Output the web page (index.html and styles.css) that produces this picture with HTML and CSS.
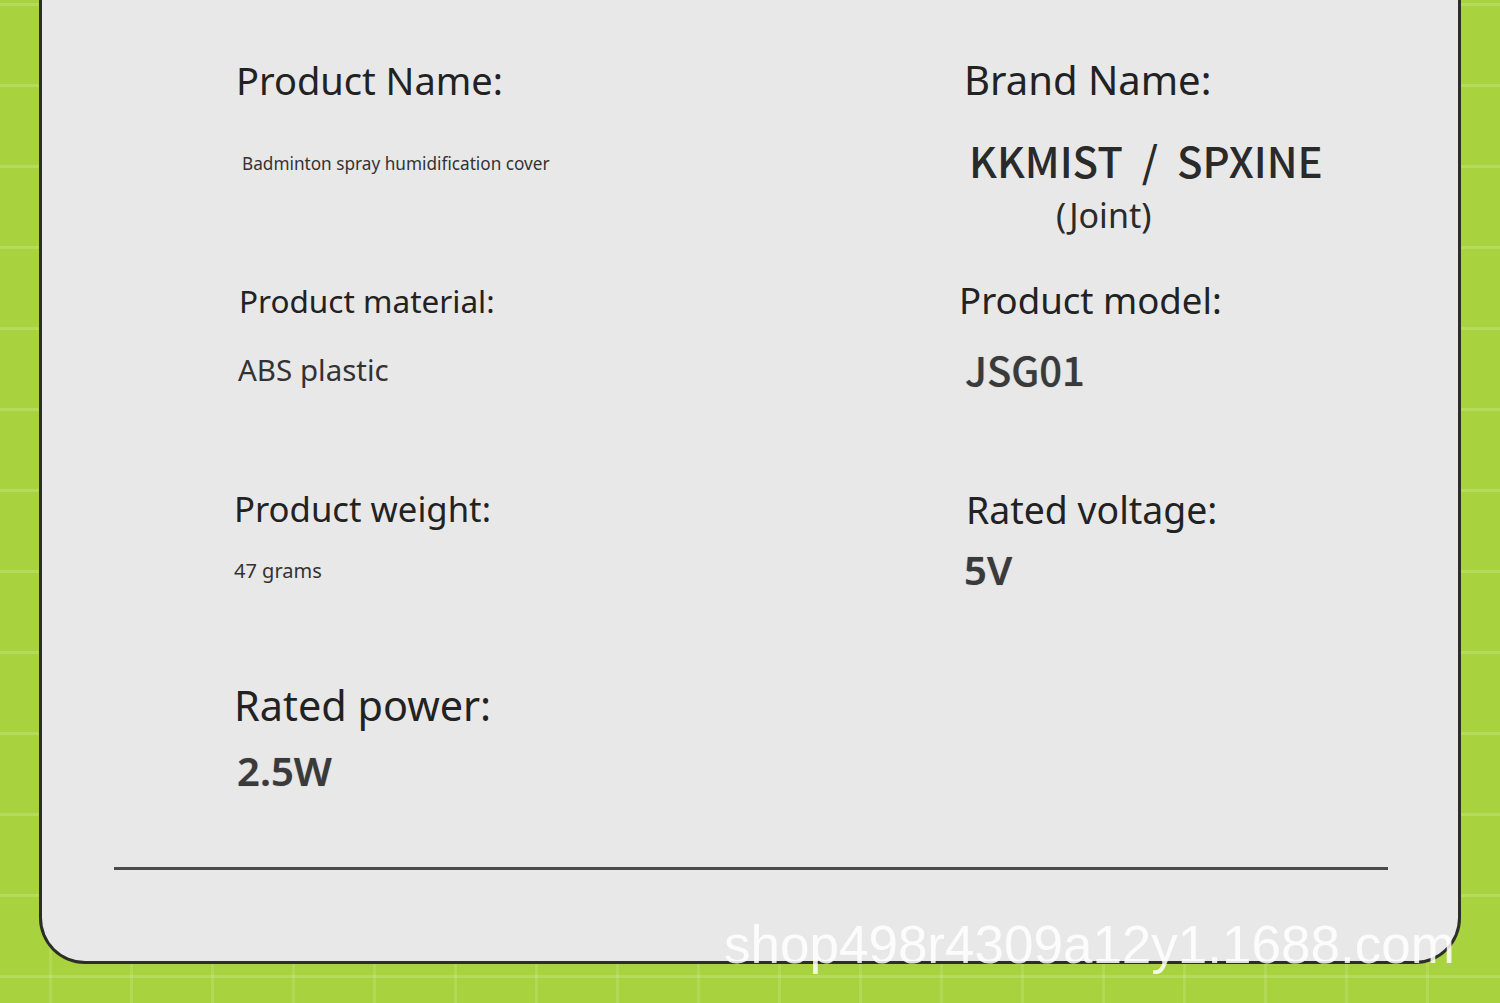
FILE: index.html
```html
<!DOCTYPE html>
<html>
<head>
<meta name="viewport" content="width=device-width, initial-scale=1.0">
<link rel="stylesheet" href="styles.css">
</head>
<body>
<div class="card">
	<div class="specs">
		<div class="cell">
			<div class="label lg">Product Name:</div>
			<div class="val-name">Badminton spray humidification cover</div>
		</div>
		<div class="cell">
			<div class="label brand-label">Brand Name:</div>
			<div class="brand">KKMIST&nbsp; /&nbsp; SPXINE</div>
			<div class="joint">(Joint)</div>
		</div>

		<div class="cell">
			<div class="label mat">Product material:</div>
			<div class="val-abs">ABS plastic</div>
		</div>
		<div class="cell shift-l">
			<div class="label model-label">Product model:</div>
			<div class="big model">JSG01</div>
		</div>

		<div class="cell shift-l2">
			<div class="label weight-label">Product weight:</div>
			<div class="val-weight">47 grams</div>
		</div>
		<div class="cell shift-r">
			<div class="label volt-label">Rated voltage:</div>
			<div class="big volt">5V</div>
		</div>

		<div class="cell shift-l2">
			<div class="label power-label">Rated power:</div>
			<div class="big power">2.5W</div>
		</div>
		<div class="cell"></div>
	</div>
	<div class="rule"></div>
</div>
<div class="watermark">shop498r4309a12y1.1688.com</div>
</body>
</html>
```

FILE: styles.css
```css
* {
	box-sizing: border-box;
}
body {
	margin: 0;
	height: 1003px;
	overflow: hidden;
	position: relative;
	background-color: #a8d33f;
	background-image:
		linear-gradient(to bottom, rgba(255,255,255,0.15) 3px, transparent 3px),
		linear-gradient(to right, rgba(255,255,255,0.12) 3px, transparent 3px);
	background-size: 81px 81px;
	background-position: 0 84px, 49px 0;
	font-family: "Noto Sans", "Open Sans", sans-serif;
	color: #222;
}
.card {
	width: 1422px;
	height: 964px;
	margin-left: 39px;
	background: #e8e8e8;
	border: 3px solid #2c2e28;
	border-top: none;
	border-radius: 0 0 46px 46px;
	padding: 61px 0 0 194px;
}
.specs {
	display: grid;
	grid-template-columns: 726px 1fr;
	grid-template-rows: 224px 207px 193px 106px;
}
.label {
	line-height: 1;
	color: #222;
	white-space: nowrap;
}
.lg { font-size: 38px; }
.brand-label {
	font-size: 40px;
	margin: -1px 0 0 2px;
}
.mat {
	font-size: 31.5px;
	margin-left: 3px;
}
.model-label {
	font-size: 36.6px;
	margin-top: -3px;
}
.weight-label { font-size: 34.7px; }
.volt-label {
	font-size: 37.4px;
	margin-top: -1px;
}
.power-label {
	font-size: 41.4px;
	margin-top: 0;
}
.shift-l { margin-left: -3px; }
.shift-l2 { margin-left: -2px; }
.shift-r { margin-left: 4px; }
.val-name {
	font-size: 17.2px;
	line-height: 1;
	color: #333;
	margin: 56px 0 0 6px;
}
.brand {
	font-family: "Noto Sans CJK SC", "Noto Sans", sans-serif;
	font-size: 42px;
	font-weight: 500;
	line-height: 1;
	color: #2a2a2a;
	margin: 39px 0 0 7px;
	white-space: nowrap;
}
.joint {
	font-size: 34px;
	line-height: 1;
	color: #2a2a2a;
	margin: 17px 0 0 94px;
}
.val-abs {
	font-size: 29.5px;
	line-height: 1;
	color: #333;
	margin: 38px 0 0 2px;
}
.val-weight {
	font-size: 20px;
	line-height: 1;
	color: #333;
	margin-top: 34px;
}
.big {
	font-size: 40px;
	font-weight: 600;
	line-height: 1;
	color: #3a3a3a;
	text-shadow: 0 0 1px rgba(0,0,0,0.35);
}
.model {
	font-family: "Noto Sans CJK SC", "Noto Sans", sans-serif;
	font-weight: 500;
	margin: 30px 0 0 6px;
}
.volt { margin: 22px 0 0 -2px; }
.power { margin: 25px 0 0 3px; }
.rule {
	height: 3px;
	background: #4a4a4a;
	margin: 76px 70px 0 -122px;
}
.watermark {
	position: absolute;
	left: 724px;
	top: 918px;
	font-family: "Liberation Sans", Arial, sans-serif;
	font-size: 53px;
	line-height: 1;
	color: rgba(255,255,255,0.85);
	white-space: nowrap;
}
```
